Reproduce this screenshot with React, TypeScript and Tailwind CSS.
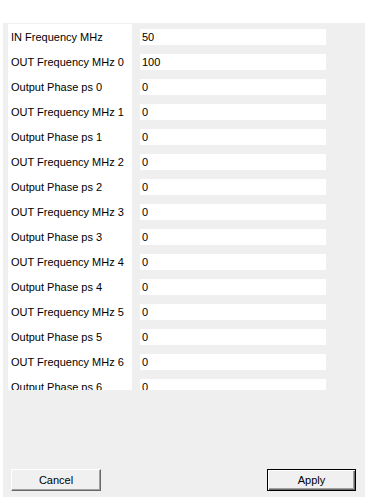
const rows: [string, string][] = [
  ["IN Frequency MHz", "50"],
  ["OUT Frequency MHz 0", "100"],
  ["Output Phase ps 0", "0"],
  ["OUT Frequency MHz 1", "0"],
  ["Output Phase ps 1", "0"],
  ["OUT Frequency MHz 2", "0"],
  ["Output Phase ps 2", "0"],
  ["OUT Frequency MHz 3", "0"],
  ["Output Phase ps 3", "0"],
  ["OUT Frequency MHz 4", "0"],
  ["Output Phase ps 4", "0"],
  ["OUT Frequency MHz 5", "0"],
  ["Output Phase ps 5", "0"],
  ["OUT Frequency MHz 6", "0"],
  ["Output Phase ps 6", "0"],
];

const ParamRow = ({ label, value }: { label: string; value: string }) => (
  <div className="flex h-[25px]">
    <div className="flex w-[124px] items-center bg-white pl-[3px] pt-[1px]">{label}</div>
    <div className="ml-[8px] pt-[5px]">
      <div className="flex h-[16px] w-[186px] items-center bg-white pl-[2px]">{value}</div>
    </div>
  </div>
);

export default function App() {
  return (
    <div className="h-[501px] w-[368px] bg-white pt-[23px] text-[11px] text-black [font-family:'Liberation_Sans',Arial,sans-serif]">
      <div className="ml-[3px] flex h-[474px] w-[362px] flex-col bg-[#efefef]">
        <div className="ml-[5px] mt-[1px] h-[366px] overflow-hidden">
          {rows.map(([label, value]) => (
            <ParamRow key={label} label={label} value={value} />
          ))}
        </div>
        <div className="mt-auto mb-[6px] flex justify-between pl-[8px] pr-[9px]">
          <button className="h-[22px] w-[90px] border border-t-white border-l-white border-r-[#696969] border-b-[#696969] bg-[#f0f0f0] shadow-[inset_-1px_-1px_0_#a0a0a0]">
            Cancel
          </button>
          <button className="h-[22px] w-[89px] border border-black bg-[#f0f0f0] shadow-[inset_1px_1px_0_#fff,inset_-1px_-1px_0_#696969,inset_-2px_-2px_0_#a0a0a0]">
            Apply
          </button>
        </div>
      </div>
    </div>
  );
}
